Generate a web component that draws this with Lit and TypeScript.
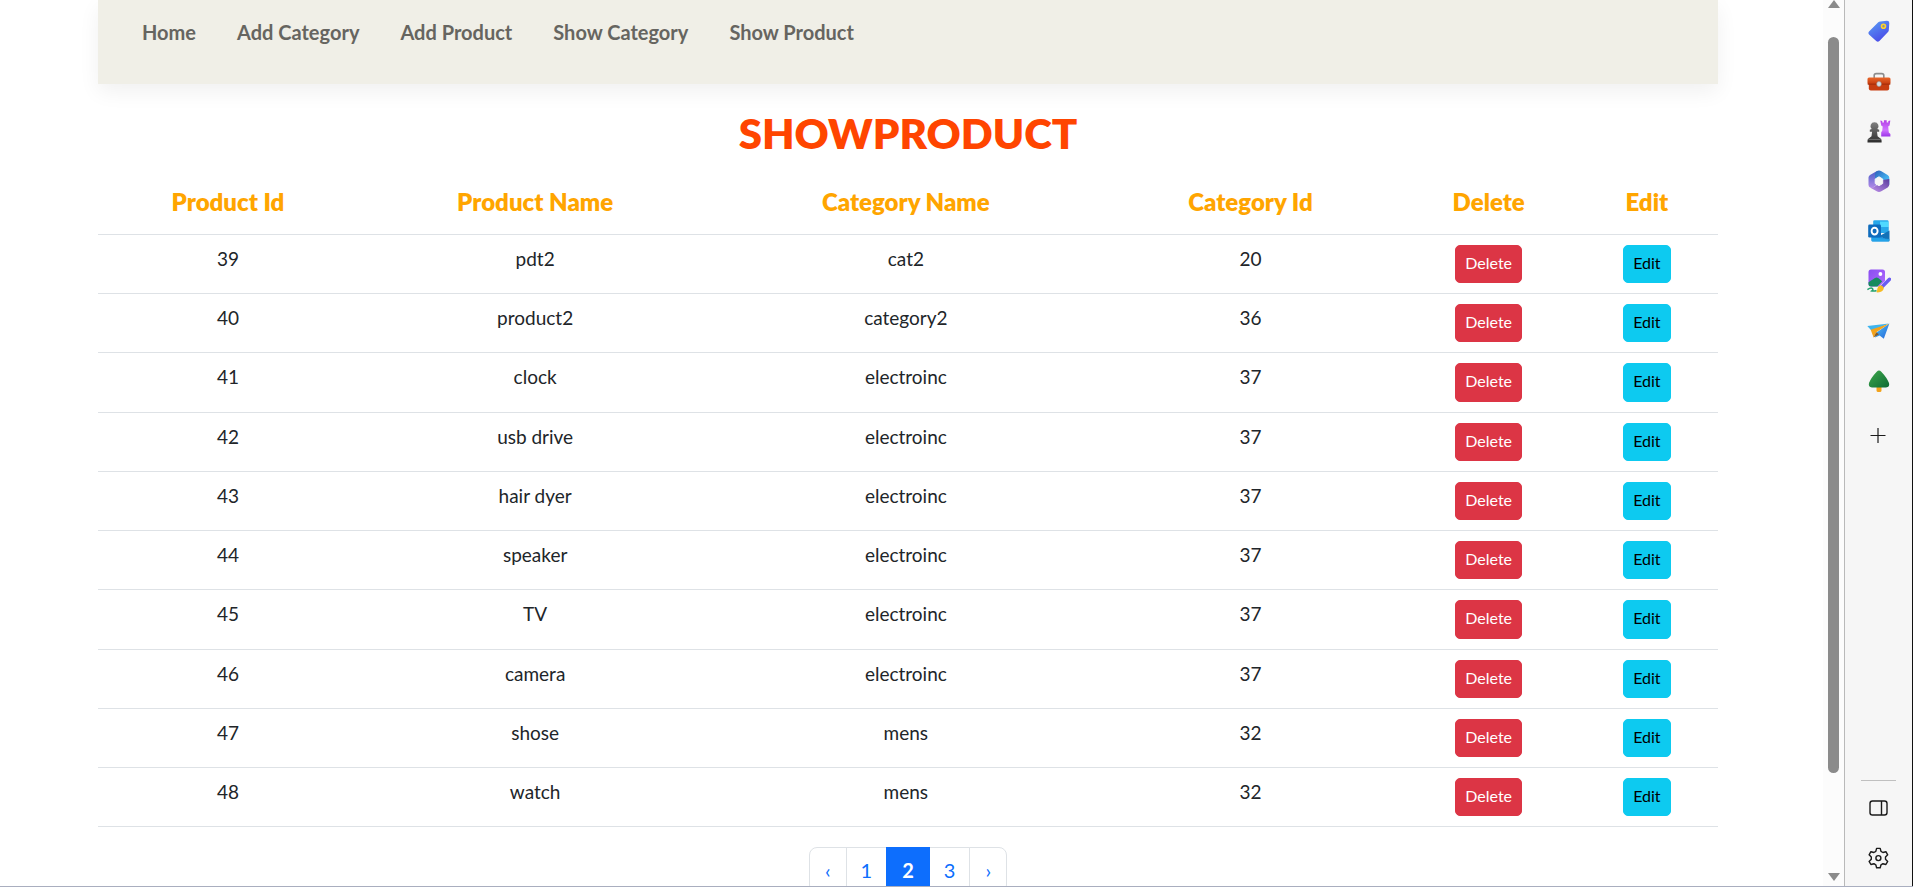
import { LitElement, html, css, svg } from "lit";
import { customElement, property, state } from "lit/decorators.js";
import { classMap } from "lit/directives/class-map.js";

interface Product {
  id: number;
  name: string;
  category: string;
  categoryId: number;
}

const PRODUCTS: Product[] = [
  { id: 39, name: "pdt2", category: "cat2", categoryId: 20 },
  { id: 40, name: "product2", category: "category2", categoryId: 36 },
  { id: 41, name: "clock", category: "electroinc", categoryId: 37 },
  { id: 42, name: "usb drive", category: "electroinc", categoryId: 37 },
  { id: 43, name: "hair dyer", category: "electroinc", categoryId: 37 },
  { id: 44, name: "speaker", category: "electroinc", categoryId: 37 },
  { id: 45, name: "TV", category: "electroinc", categoryId: 37 },
  { id: 46, name: "camera", category: "electroinc", categoryId: 37 },
  { id: 47, name: "shose", category: "mens", categoryId: 32 },
  { id: 48, name: "watch", category: "mens", categoryId: 32 },
];

@customElement("site-nav")
export class SiteNav extends LitElement {
  static styles = css`
    :host {
      display: block;
    }
    .nav {
      display: flex;
      gap: 41px;
      padding: 16px 44px 36px;
      background: #f0efe7;
      box-shadow: 0 8px 20px rgba(0, 0, 0, 0.06);
    }
    .link {
      font-size: 20px;
      line-height: 32px;
      font-weight: 700;
      color: #666560;
      text-decoration: none;
    }
  `;

  render() {
    const links = ["Home", "Add Category", "Add Product", "Show Category", "Show Product"];
    return html`<nav class="nav">
      ${links.map((l) => html`<a class="link" href="#">${l}</a>`)}
    </nav>`;
  }
}

@customElement("product-table")
export class ProductTable extends LitElement {
  @property({ attribute: false }) products: Product[] = [];

  static styles = css`
    :host {
      display: block;
    }
    .table {
      width: 100%;
      table-layout: fixed;
      border-collapse: collapse;
      text-align: center;
      color: #212529;
    }
    .c-id { width: 16.05%; }
    .c-name { width: 21.87%; }
    .c-cat { width: 23.9%; }
    .c-catid { width: 18.65%; }
    .c-del { width: 10.75%; }
    .c-edit { width: 8.78%; }
    .head {
      padding: 10px 10px 11px;
      font-size: 24px;
      line-height: 42px;
      font-weight: 800;
      color: #ffa500;
      border-bottom: 1px solid #dee2e6;
    }
    .cell {
      padding: 10px;
      font-size: 19px;
      line-height: 28px;
      vertical-align: top;
      border-bottom: 1px solid #dee2e6;
    }
    .btn {
      display: block;
      margin: 0 auto;
      padding: 4px 9px 6px;
      font: inherit;
      font-size: 16px;
      line-height: 1.64;
      border: 1px solid;
      border-radius: 5px;
    }
    .danger {
      color: #fff;
      background: #dc3545;
      border-color: #dc3545;
    }
    .info {
      color: #000;
      background: #0dcaf0;
      border-color: #0dcaf0;
    }
  `;

  render() {
    return html`<table class="table">
      <colgroup>
        <col class="c-id" /><col class="c-name" /><col class="c-cat" />
        <col class="c-catid" /><col class="c-del" /><col class="c-edit" />
      </colgroup>
      <thead>
        <tr>
          ${["Product Id", "Product Name", "Category Name", "Category Id", "Delete", "Edit"].map(
            (h) => html`<th class="head" scope="col">${h}</th>`
          )}
        </tr>
      </thead>
      <tbody>
        ${this.products.map(
          (p) => html`<tr>
            <td class="cell">${p.id}</td>
            <td class="cell">${p.name}</td>
            <td class="cell">${p.category}</td>
            <td class="cell">${p.categoryId}</td>
            <td class="cell"><button class="btn danger" type="button">Delete</button></td>
            <td class="cell"><button class="btn info" type="button">Edit</button></td>
          </tr>`
        )}
      </tbody>
    </table>`;
  }
}

@customElement("page-links")
export class PageLinks extends LitElement {
  @state() current = "2";

  static styles = css`
    :host {
      display: block;
    }
    .list {
      display: flex;
      justify-content: center;
      margin: 0;
      padding: 0;
      list-style: none;
    }
    .link {
      display: block;
      padding: 8px 14px;
      font-size: 20px;
      line-height: 28px;
      color: #0d6efd;
      text-decoration: none;
      background: #fff;
      border: 1px solid #dee2e6;
    }
    .item + .item {
      margin-left: -1px;
    }
    .item:first-child .link,
    .item:last-child .link {
      padding: 8px 15px;
    }
    .item:first-child .link {
      border-radius: 8px 0 0 8px;
    }
    .item:last-child .link {
      border-radius: 0 8px 8px 0;
    }
    .active {
      position: relative;
      padding: 8px 15px;
      font-weight: 700;
      color: #fff;
      background: #0d6efd;
      border-color: #0d6efd;
    }
  `;

  render() {
    return html`<nav aria-label="Pages">
      <ul class="list">
        ${["‹", "1", "2", "3", "›"].map(
          (p) => html`<li class="item">
            <a class=${classMap({ link: true, active: p === this.current })} href="#">${p}</a>
          </li>`
        )}
      </ul>
    </nav>`;
  }
}

const tagIcon = svg`
  <defs><linearGradient id="tg" x1="0" y1="0" x2="0.6" y2="1"><stop offset="0" stop-color="#5aa2f5"/><stop offset="1" stop-color="#4a4be8"/></linearGradient></defs>
  <path d="M13.200 2.600 20 1.800q2.300 0 2.300 2.200l-.5 7.200q-.1 1-.8 1.700l-8.600 9q-1.600 1.500-3.200 0L2 15.600q-1.400-1.600 0-3.100L11 3.600q1-.9 2.200-1z" fill="url(#tg)"/>
  <circle cx="16.500" cy="7.300" r="2" fill="#8b8f9c" stroke="#ffd32a" stroke-width="1.600"/>`;

const toolboxIcon = svg`
  <defs><linearGradient id="tb" x1="0" y1="0" x2="0" y2="1"><stop offset="0" stop-color="#e8672a"/><stop offset="1" stop-color="#c2370c"/></linearGradient></defs>
  <g transform="translate(0 1.600)">
    <path d="M7.200 8V5q0-2 2-2h5.600q2 0 2 2v3" fill="none" stroke="#8d8d8d" stroke-width="1.600"/>
    <path d="M1.800 12h20.400v6q0 2-2 2H3.800q-2 0-2-2z" fill="#c73d10"/>
    <rect x=".5" y="7" width="23" height="7" rx="1.500" fill="url(#tb)"/>
    <path d="M.7 13.600h22.600" stroke="#9c2c0a" stroke-width=".8"/>
    <rect x="9.800" y="11" width="4.400" height="4.800" rx="2" fill="#d9dde0" stroke="#999" stroke-width=".6"/>
  </g>`;

const gamesIcon = svg`
  <defs>
    <linearGradient id="gp" x1="0" y1="0" x2="0" y2="1"><stop offset="0" stop-color="#808080"/><stop offset="1" stop-color="#2c2c2c"/></linearGradient>
    <linearGradient id="gr" x1="0" y1="0" x2="0" y2="1"><stop offset="0" stop-color="#b43fe6"/><stop offset=".6" stop-color="#cf74ff"/><stop offset="1" stop-color="#9b35e8"/></linearGradient>
  </defs>
  <path d="M13.300 1.600l2 .5v1.400h1.600V1.200h2.800v2.300h1.600V2.100l2-.5-.7 4.800-1.400 1.200.6 6 1.600 1.400v2.500h-9.200V13.200l1-1.400.5-4.200-1.500-1.200z" fill="url(#gr)"/>
  <path d="M7.500 3.200a4 4 0 0 1 2.800 6.900l1.900.7v2H10l.6 4.400 3.200 2.500q.8.700.8 2v1.800H.5v-1.800q0-1.300.8-2l3.200-2.500.6-4.400H2.800v-2l1.900-.7a4 4 0 0 1 2.800-6.900z" fill="url(#gp)"/>
  <path d="M1.400 20.400h12.300" stroke="#8a8a8a" stroke-width=".7"/>`;

const officeIcon = svg`
  <defs>
    <linearGradient id="oa" x1="0" y1="0" x2="0" y2="1"><stop offset="0" stop-color="#4a5fc8"/><stop offset="1" stop-color="#b28ae8"/></linearGradient>
    <linearGradient id="ob" x1="0" y1="0" x2="1" y2="1"><stop offset="0" stop-color="#2f5fb8"/><stop offset=".6" stop-color="#3fa9ea"/><stop offset="1" stop-color="#5ccbf7"/></linearGradient>
    <linearGradient id="oc" x1="0" y1="1" x2="1" y2="0"><stop offset="0" stop-color="#c193ec"/><stop offset="1" stop-color="#5a3c9e"/></linearGradient>
  </defs>
  <path d="M10 2 3 6Q1.500 7 1.500 8.600v7.200q0 2 1.600 2.800 1.600.7 3-.2l3.200-2.200-1.300-4.500z" fill="url(#oa)"/>
  <path d="M9.600 2.200q2.400-1.500 4.800 0L20.600 6q1.700 1 1.700 2.800v7L15.800 12 8 12V5.600q0-2.200 1.600-3.400z" fill="url(#ob)"/>
  <path d="M22.300 14v1.600q0 1.800-1.600 2.800l-6.400 3.900q-2.300 1.300-4.600 0L3.400 18.700q1.600.5 3-.4l7-4.200 2.300-3 6.600-1z" fill="url(#oc)"/>
  <path d="M12 7.800 15.700 10v4.500L12 16.700l-3.800-2.200V10z" fill="#f6f6f6" stroke="#f6f6f6" stroke-linejoin="round"/>`;

const outlookIcon = svg`
  <path d="M7.500 1.300h12.800q1.200 0 1.200 1.200V13H6.200V2.500q0-1.200 1.300-1.200z" fill="#28a8ea"/>
  <path d="M13 2.600h8.500V8H13z" fill="#50d9ff"/><path d="M6.200 8H13v6H6.200z" fill="#0364b8"/><path d="M13 8h8.500v6H13z" fill="#28a8ea"/>
  <path d="M4.400 12.500 22.400 22q-.4.400-1.200.4H5.600q-1.200 0-1.200-1.200z" fill="#1490df"/>
  <path d="M22.500 11.500v9.700q0 .8-.6 1.100L12.500 17z" fill="#1272b8"/>
  <path d="M22.500 20v1.200q0 1.200-1.200 1.200H5.600l-1-.6v-3.200z" fill="#28a8ea" opacity=".8"/>
  <rect x="1.200" y="5.600" width="12.800" height="13" rx="1.300" fill="#0f6cbd"/>
  <ellipse cx="7.600" cy="12.100" rx="3" ry="3.400" fill="none" stroke="#fff" stroke-width="1.900"/>`;

const designerIcon = svg`
  <defs><linearGradient id="dg" x1="0" y1="0" x2="1" y2="1"><stop offset="0" stop-color="#8a4df0"/><stop offset="1" stop-color="#b06bff"/></linearGradient></defs>
  <path d="M4 .6h11.500Q18 .6 18 3.100V12l-6 5.600H4q-2.500 0-2.500-2.500v-12Q1.500.6 4 .6z" fill="url(#dg)"/>
  <path d="M1.500 13.200 8 9q1.600-1 3.200 0l4 3.200-4.800 5.400H4q-2.500 0-2.500-2.500z" fill="#178a5f"/>
  <circle cx="13.400" cy="5" r="1.900" fill="#fff"/>
  <path d="M.4 20.600q3.600-2.400 5-1.100 1.100 1.300-.5 2.400 2.700.5 4.600-.4" fill="none" stroke="#23a26d" stroke-width="1.500"/>
  <path d="M15.600 17.200 22.500 10.200" stroke="#6a5cf2" stroke-width="3.400" stroke-linecap="round"/>
  <path d="M13.600 16.200q2.800.4 3.200 3-.7 3.800-6 4.200-1.800 0-1.200-1.200.8-.8.700-2.500.4-2.900 3.300-3.500z" fill="#f6bb22"/>`;

const dropIcon = svg`
  <defs><linearGradient id="pd" x1="0" y1="0" x2="1" y2="1"><stop offset="0" stop-color="#4ec3f5"/><stop offset="1" stop-color="#2463d8"/></linearGradient></defs>
  <g transform="translate(0 1.400)">
    <path d="M.3 5.600 22 3.200 4.800 10.500z" fill="#3fb4ee"/>
    <path d="M22.400 3.200 16.800 18.400 12.600 15 8 17l1.500-5z" fill="url(#pd)"/>
    <path d="M22.200 3.300 3.700 9.300 6.600 17l2.600-5.200z" fill="#f5a31a"/>
    <path d="m6.600 17 2.600-5.200 2.700 2z" fill="#8a5a1e"/>
  </g>`;

const treeIcon = svg`
  <defs><linearGradient id="tr" x1="0" y1="0" x2="1" y2="1"><stop offset="0" stop-color="#3fa84c"/><stop offset="1" stop-color="#0d6b35"/></linearGradient></defs>
  <path d="M9.500 17h5v4.600q0 1.400-1.200 1.400h-2.600q-1.200 0-1.200-1.400z" fill="#f2a31c"/>
  <path d="M9.700 2.700q2.300-2.500 4.600 0Q20 8.700 22 14q1 4-3 4.600H5Q1 18 2 14 4 8.700 9.700 2.700z" fill="url(#tr)"/>`;

const plusIcon = svg`<path d="M3.500 12.500h15M11 5v15" stroke="#1b1b1b" stroke-width="1.200" fill="none"/>`;

const panelIcon = svg`
  <rect x="3" y="5" width="17" height="14" rx="2.500" fill="none" stroke="#1b1b1b" stroke-width="1.400"/>
  <path d="M14.500 5v14" stroke="#1b1b1b" stroke-width="1.400"/>`;

const gearIcon = svg`
  <path d="M9.600 2.400h3.600l.8 3 1.900 1.100 3-.8 1.800 3.100-2.200 2.200v2.200l2.200 2.200-1.800 3.100-3-.8-1.900 1.100-.8 3H9.600l-.8-3-1.900-1.100-3 .8-1.800-3.100 2.200-2.200V11L2.100 8.800l1.800-3.100 3 .8 1.900-1.100z" fill="none" stroke="#1b1b1b" stroke-width="1.400" stroke-linejoin="round"/>
  <circle cx="11.400" cy="12.100" r="2.500" fill="none" stroke="#1b1b1b" stroke-width="1.400"/>`;

@customElement("edge-rail")
export class EdgeRail extends LitElement {
  static styles = css`
    :host {
      display: flex;
      flex-direction: column;
      box-sizing: border-box;
      width: 69px;
      padding: 6px 0 3px;
      background: #f6f6f6;
      border-left: 1px solid #b9b9b9;
      border-right: 1px solid #111;
    }
    .tool {
      display: grid;
      place-items: center;
      height: 50px;
      width: 100%;
      padding: 0;
      border: 0;
      background: none;
    }
    .add {
      margin-top: 4px;
    }
    .spacer {
      flex: 1;
    }
    .rule {
      margin: 0 16px 2px;
      border: 0;
      border-top: 1px solid #c0c0c0;
    }
    .icon {
      display: block;
      width: 24px;
      height: 24px;
    }
  `;

  private tool(label: string, icon: unknown, extra = false) {
    return html`<button
      type="button"
      class=${classMap({ tool: true, add: extra })}
      aria-label=${label}
    >
      <svg class="icon" viewBox="0 0 24 24" aria-hidden="true">${icon}</svg>
    </button>`;
  }

  render() {
    return html`
      ${this.tool("Shopping", tagIcon)} ${this.tool("Tools", toolboxIcon)}
      ${this.tool("Games", gamesIcon)} ${this.tool("Microsoft 365", officeIcon)}
      ${this.tool("Outlook", outlookIcon)} ${this.tool("Image creator", designerIcon)}
      ${this.tool("Drop", dropIcon)} ${this.tool("Tree", treeIcon)}
      ${this.tool("Customize", plusIcon, true)}
      <div class="spacer"></div>
      <hr class="rule" />
      ${this.tool("Hide sidebar", panelIcon)} ${this.tool("Settings", gearIcon)}
    `;
  }
}

@customElement("app-root")
export class AppRoot extends LitElement {
  static styles = css`
    :host {
      display: flex;
      box-sizing: border-box;
      height: 100vh;
      overflow: hidden;
      background: #fff;
      border-bottom: 1px solid #a9aebf;
      font-family: Lato, "Open Sans", sans-serif;
    }
    .page {
      flex: 1;
      min-width: 0;
      overflow: hidden;
      padding: 0 105px 0 98px;
    }
    .title {
      margin: 25px 0 14px;
      font-size: 42px;
      line-height: 48px;
      font-weight: 800;
      text-align: center;
      color: #ff4500;
    }
    .pages {
      margin-top: 20px;
    }
    .scroll {
      display: flex;
      flex-direction: column;
      align-items: center;
      width: 21px;
      background: #fcfcfc;
    }
    .up,
    .down {
      width: 0;
      border: 6px solid transparent;
    }
    .up {
      border-top: 0;
      border-bottom: 8px solid #8b8b8b;
    }
    .down {
      margin-bottom: 5px;
      border-bottom: 0;
      border-top: 8px solid #8b8b8b;
    }
    .track {
      flex: 1;
      display: flex;
      flex-direction: column;
      padding: 29px 0 0;
    }
    .thumb {
      flex: 0 0 88%;
      width: 11px;
      border-radius: 6px;
      background: #8b8b8b;
    }
  `;

  render() {
    return html`
      <main class="page">
        <site-nav></site-nav>
        <h1 class="title">SHOWPRODUCT</h1>
        <product-table .products=${PRODUCTS}></product-table>
        <page-links class="pages"></page-links>
      </main>
      <div class="scroll" aria-hidden="true">
        <span class="up"></span>
        <div class="track"><div class="thumb"></div></div>
        <span class="down"></span>
      </div>
      <edge-rail></edge-rail>
    `;
  }
}
